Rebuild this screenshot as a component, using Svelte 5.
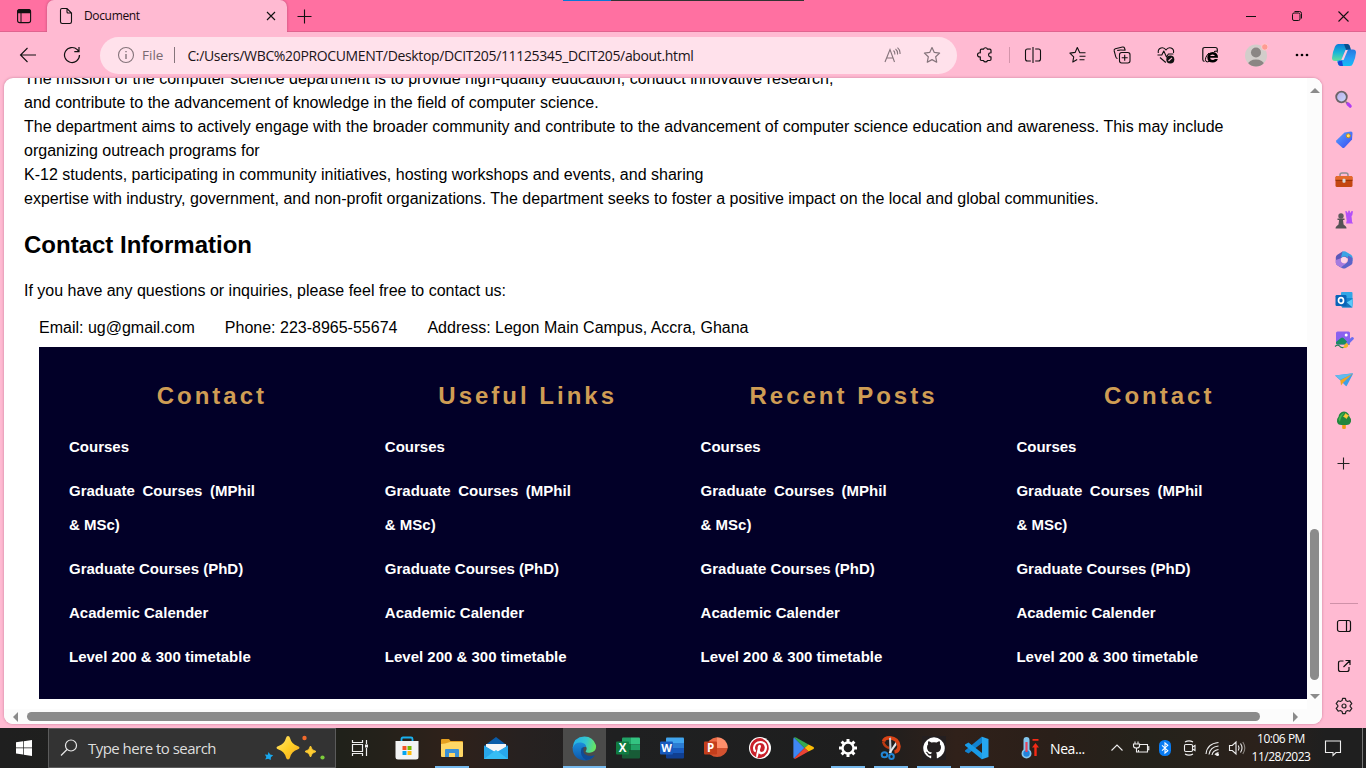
<script>
  const courses = ['Courses', 'Graduate Courses (MPhil & MSc)', 'Graduate Courses (PhD)', 'Academic Calender', 'Level 200 & 300 timetable'];
  const columns = ['Contact', 'Useful Links', 'Recent Posts', 'Contact'];
</script>

<div class="screen">
  <div class="peek"><i></i></div>
  <header class="titlebar">
    <div class="workspace">
      <svg width="16" height="16" viewBox="0 0 16 16"><rect x="1.6" y="1.6" width="13" height="13" rx="2.2" fill="none" stroke="#111" stroke-width="1.1"/><path d="M1.2 5.3V3.6Q1.2 1 3.8 1h8.6Q15 1 15 3.6v1.700z" fill="#111"/><path d="M5 5v9.500" stroke="#111"/></svg>
    </div>
    <div class="tab">
      <svg width="14" height="18" viewBox="0 0 14 18" fill="none" stroke="#111" stroke-width="1.1"><path d="M3 1.500h5l4.500 4.500v8.800q0 1.700-1.700 1.700H3.200q-1.700 0-1.700-1.700V3.200Q1.500 1.500 3 1.500zM8 1.500V5q0 1 1 1h3.500"/></svg>
      <span>Document</span>
      <svg class="close" width="10" height="10" viewBox="0 0 10 10" stroke="#111" stroke-width="1.1"><path d="M1 1l8 8M9 1L1 9"/></svg>
    </div>
    <svg class="newtab" width="15" height="15" viewBox="0 0 15 15" stroke="#111" stroke-width="1.1"><path d="M7.500 .5v14M.5 7.500h14"/></svg>
    <div class="win">
      <svg width="10" height="10" viewBox="0 0 10 10"><path d="M0 5.500h10" stroke="#111"/></svg>
      <svg width="12" height="12" viewBox="0 0 12 12" fill="none" stroke="#111"><rect x="1.500" y="3" width="7.500" height="7.500" rx="1.500"/><path d="M3.500 1.500h5Q10.500 1.500 10.500 3.500v5"/></svg>
      <svg width="11" height="11" viewBox="0 0 11 11" stroke="#111" stroke-width="1.1"><path d="M.5 .5l10 10M10.500 .5l-10 10"/></svg>
    </div>
  </header>

  <nav class="toolbar">
    <div class="cell back"><svg width="18" height="16" viewBox="0 0 18 16" fill="none" stroke="#111" stroke-width="1.1"><path d="M17 8H1.500M8.500 1L1.500 8l7 7"/></svg></div>
    <div class="cell reload"><svg width="18" height="18" viewBox="0 0 18 18" fill="none" stroke="#111" stroke-width="1.200"><path d="M16.500 9a7.500 7.500 0 1 1-2.200-5.300L16 5.500M16 1v4.700h-4.700"/></svg></div>
    <div class="address">
      <svg width="18" height="18" viewBox="0 0 18 18" fill="none" stroke="#85747b" stroke-width="1.100"><circle cx="9" cy="9" r="7.500"/><path d="M9 8v5M9 5v1.300" stroke-width="1.400"/></svg>
      <span class="file">File</span><i></i>
      <span class="url">C:/Users/WBC%20PROCUMENT/Desktop/DCIT205/11125345_DCIT205/about.html</span>
      <svg class="read" width="18" height="18" viewBox="0 0 18 18" fill="none" stroke="#85747b" stroke-width="1.100"><path d="M2 16L7 3.500 11.500 16M3.600 12h6.500M10.500 4.500q1.600 1.500 1.300 4M12.500 3q2.500 2 2 5.500M14.500 1.700q3 2.500 2.500 6.300"/></svg>
      <svg class="star" width="18" height="18" viewBox="0 0 18 18" fill="none" stroke="#85747b" stroke-width="1.200" stroke-linejoin="round"><path d="M9 1.500l2.300 4.900 5.300.7-3.900 3.700 1 5.400L9 13.600l-4.700 2.600 1-5.400L1.400 7.100l5.300-.7z"/></svg>
    </div>
    <div class="cell puzzle"><svg width="18" height="18" viewBox="0 0 18 18" fill="none" stroke="#111" stroke-width="1.200" stroke-linejoin="round"><path d="M5.500 3.200h2a2.100 2.100 0 0 1 4 0h2.300q1.200 0 1.200 1.200v2.400c-3.200-.7-3.200 4.700 0 4v2.500q0 1.200-1.200 1.200h-2.300a2.100 2.100 0 0 1-4 0h-2q-1.200 0-1.200-1.200v-2.400c-3.700.7-3.700-4.800 0-4.100V4.400q0-1.200 1.200-1.200z"/></svg></div>
    <div class="cell sep"><i></i></div>
    <div class="cell"><svg width="18" height="18" viewBox="0 0 18 18" fill="none" stroke="#111" stroke-width="1.100"><path d="M9 1v16M6.800 3H3.500q-2 0-2 2v8q0 2 2 2h3.300M11.200 3h3.300q2 0 2 2v8q0 2-2 2h-3.300"/></svg></div>
    <div class="cell w45"><svg width="18" height="18" viewBox="0 0 18 18" fill="none" stroke="#111" stroke-width="1.100" stroke-linejoin="round"><path d="M16.500 6.700h-5.700L8.300 1.500 6.100 6.400.9 7.100l3.800 3.700-.9 5.200 4.400-2.400M10.500 10.200h6M10.500 13.700h5"/></svg></div>
    <div class="cell"><svg width="18" height="18" viewBox="0 0 18 18" fill="none" stroke="#111" stroke-width="1.100" stroke-linejoin="round"><rect x="6.500" y="6.500" width="10.500" height="10.500" rx="2.200"/><path d="M11.700 8.800v6M8.700 11.800h6M4.500 12.500q-1.200-.2-1.700-1.700L1.200 5q-.4-1.600 1.100-2.200L9.500 1q1.500-.3 2 1l.7 2.300M4.200 4.500q1.800-1 8.500-.2"/></svg></div>
    <div class="cell"><svg width="18" height="18" viewBox="0 0 18 18" fill="none" stroke="#111" stroke-width="1.100" stroke-linejoin="round"><path d="M1.300 7C.5 1.800 6.500 0 9 4c2.500-4 8.500-2.200 7.500 3M.5 9h4.300l2-4 2.700 6 1.900-3h5M3 11.500l5.800 5"/><circle cx="13.300" cy="13.500" r="4" fill="#111" stroke="none"/><path d="M11.500 15l3.500-3.200" stroke="#ffbad2"/></svg></div>
    <div class="cell"><svg width="18" height="18" viewBox="0 0 18 18" fill="none"><path d="M3.500 15.500q-1.700-.2-1.700-2V3.500q0-2 2-2h10.500q2 0 2 2v2" stroke="#111" stroke-width="1.200"/><path d="M17 11.800H9Q9.400 14 11.800 14q1.400 0 2-1l3 .1Q15.800 16.500 11.800 16.500q-5.300 0-5.500-5Q6.400 6.400 11.800 6 17.200 6.400 17 11.800zM9.100 10h4.800Q13.500 8.400 11.600 8.400 9.500 8.400 9.100 10z" fill="#000"/><path d="M8 7q-5 5-3 8.500 1.500 1 4-.5M13 5.500q3.500-1.500 3.500 1" stroke="#000"/></svg></div>
    <div class="cell avatar"><svg width="24" height="24" viewBox="0 0 24 24"><defs><clipPath id="av"><circle cx="12" cy="12.500" r="11"/></clipPath></defs><circle cx="12" cy="12.500" r="11" fill="#d2cdca"/><g clip-path="url(#av)" fill="#8b8684"><circle cx="12" cy="9.500" r="5"/><ellipse cx="12" cy="21.500" rx="8" ry="5"/></g><circle cx="20.800" cy="4" r="3.200" fill="#ff9b92" stroke="#ffd0d8" stroke-width=".8"/></svg></div>
    <div class="cell"><svg width="16" height="6" viewBox="0 0 16 6"><circle cx="3" cy="3" r="1.350"/><circle cx="8" cy="3" r="1.350"/><circle cx="13" cy="3" r="1.350"/></svg></div>
    <div class="cell w40"><svg width="26" height="24" viewBox="0 0 26 24"><defs><linearGradient id="ca" x2="0" y2="1"><stop stop-color="#0b7bd8"/><stop offset=".5" stop-color="#19b6d8"/><stop offset="1" stop-color="#64e09a"/></linearGradient><linearGradient id="cb" x2="0" y2="1"><stop stop-color="#2878df"/><stop offset=".55" stop-color="#299cf6"/><stop offset="1" stop-color="#10bdf3"/></linearGradient></defs><path d="M7 1h9q2.500 0 3 3l.8 3h-4.500l-3 8q-1 3-3.500 3H4q-3 0-3-3Q1.500 9 4 3.500 5 1 7 1z" fill="url(#ca)"/><path d="M13 1h3.500q2 .3 2.600 3l.7 3h-4.500L14 4z" fill="#0a4f8d"/><path d="M19 23h-9q-3 0-3.500-4L6 17.500h4l3-8q1-3 3.500-3H22q3 0 3 3-.5 6-3 11Q21 23 19 23z" fill="url(#cb)"/><path d="M8 17.800h3l1 5.200h-2q-2.700 0-3.200-3.500z" fill="#1846d4"/><path d="M14.500 7h2.300l-4.200 10h-2.400z" fill="#ffcbdc"/></svg></div>
  </nav>

  <main>
    <section class="page">
      <div class="viewport">
        <div class="text">
          <p class="mission">The mission of the computer science department is to provide high-quality education, conduct innovative research,<br>and contribute to the advancement of knowledge in the field of computer science.<br>The department aims to actively engage with the broader community and contribute to the advancement of computer science education and awareness. This may include organizing outreach programs for<br>K-12 students, participating in community initiatives, hosting workshops and events, and sharing<br>expertise with industry, government, and non-profit organizations. The department seeks to foster a positive impact on the local and global communities.</p>
          <h2>Contact Information</h2>
          <p class="ask">If you have any questions or inquiries, please feel free to contact us:</p>
          <div class="contacts"><span>Email: ug@gmail.com</span><span>Phone: 223-8965-55674</span><span>Address: Legon Main Campus, Accra, Ghana</span></div>
        </div>
        <footer>
          {#each columns as title}
            <div class="col">
              <h3>{title}</h3>
              <ul>{#each courses as c}<li>{c}</li>{/each}</ul>
            </div>
          {/each}
        </footer>
      </div>
      <div class="vbar"><b class="up"></b><i></i><b class="down"></b></div>
      <div class="hbar"><b class="left"></b><i></i><b class="right"></b></div>
    </section>

    <aside>
      <div class="apps">
        <svg viewBox="0 0 20 20"><defs><linearGradient id="lens" x2="1" y2="1"><stop stop-color="#b9a9e6"/><stop offset="1" stop-color="#c9dcff"/></linearGradient></defs><path d="M12 12l2.500 2.500" stroke="#777" stroke-width="2"/><path d="M14 14l2.200 2.200" stroke="#b23cf2" stroke-width="3.200" stroke-linecap="round"/><circle cx="7.500" cy="7" r="5.300" fill="url(#lens)" stroke="#6b6468" stroke-width="1.800"/></svg>
        <svg viewBox="0 0 20 20"><defs><linearGradient id="tg" x1="0" y1="0" x2="1" y2="1"><stop stop-color="#57a5ff"/><stop offset="1" stop-color="#3a49f0"/></linearGradient></defs><path d="M10.500 2.500L17 1.500q1.500 0 1.500 1.500l-.5 6.500-7.500 8q-1.200 1-2.400 0L2.500 12.500q-1-1.200 0-2.300z" fill="url(#tg)"/><circle cx="14.300" cy="5.800" r="2" fill="#ffe36b" stroke="#c88b12"/></svg>
        <svg viewBox="0 0 20 20"><path d="M6 6.500V5q0-2 2-2h4q2 0 2 2v1.500" fill="none" stroke="#8d8d92" stroke-width="1.500"/><rect x="1.500" y="6" width="17" height="11" rx="1.500" fill="#c34712"/><path d="M1.500 7.500Q1.500 6 3 6h14q1.500 0 1.500 1.500V10h-17z" fill="#e46a2b"/><path d="M1.500 10.300h17" stroke="#913006"/><rect x="8.500" y="8.700" width="3" height="4" rx="1" fill="#d8dada"/></svg>
        <svg viewBox="0 0 20 20"><path d="M11.300 1l1.500.2.400 1.300h1V.8h1.700v1.700h1l.5-1.500 1.600.3-.7 4-.8.700.6 6 1 1.500h-7l.6-3z" fill="#b450f7"/><circle cx="7" cy="6" r="2.700" fill="#5d5a5c"/><path d="M3.500 8.500h7v1.500H9l.6 4.500 2 1.700q1 .8.900 2.300h-11q0-1.500 1-2.300l2-1.700.6-4.500H3.500z" fill="#555254"/></svg>
        <svg viewBox="0 0 20 20"><path d="M8.500 1.500L14 4.500v4L10 6.500 6.500 8.500 6 17 3 15Q1.800 14 1.800 12.500V7.500Q1.800 6 3 5z" fill="#5b58b8"/><path d="M8.500 1.500q1.500-.6 3 0L17 4.800q1.500 1 1.500 2.500v4l-4-2.300q-1-2.700-4-2.700L7 7.500z" fill="#3aa4e4"/><path d="M18.500 8v4.500q0 1.500-1.500 2.500l-5.500 3.200q-1.500.7-3 0L6 17l6-3.700q2-1.200 2-3.300V5.500z" fill="#5c63c8"/><path d="M1.800 10l4.500-1.500q.2 4 3.700 5l2-.3L7 17.500 3.200 15.300Q1.800 14.300 1.800 12.800z" fill="#a57bdf"/><circle cx="10" cy="10" r="3" fill="#ffd4e6"/></svg>
        <svg viewBox="0 0 20 20"><rect x="7" y="2" width="11.500" height="13" rx="1" fill="#31a6e6"/><path d="M7 8h11.500v8.500H7z" fill="#1687cf"/><path d="M10 14l8.500-5v8.500H8z" fill="#5ac9fa"/><path d="M10 10l8.500 7.500H8z" fill="#1673bd"/><rect x="1.500" y="5" width="11" height="11" rx="1.200" fill="#0864b8"/><ellipse cx="7" cy="10.500" rx="2.500" ry="2.900" fill="none" stroke="#fff" stroke-width="1.700"/></svg>
        <svg viewBox="0 0 20 20"><rect x="2" y="1.500" width="14" height="13" rx="1.500" fill="#8b61ef"/><path d="M2 12l5-4q1.200-1 2.400 0l6.600 6.500H3.500Q2 14.500 2 13z" fill="#198c62"/><circle cx="12.200" cy="5" r="1.500" fill="#fff"/><path d="M18.300 8.500l-5 5" stroke="#6b6cf0" stroke-width="3" stroke-linecap="round"/><path d="M12.700 12.700q2.500 2 .8 4.300-2 1.700-4.600.7 1.800-4 3.800-5z" fill="#f3b62d"/><path d="M1 16.500q3-2.500 4.500-.5t4 1.500" fill="none" stroke="#267f57" stroke-width="1.200"/></svg>
        <svg viewBox="0 0 20 20"><path d="M1 5.500l17.500-2.200q.8 0 .3.900l-6 11.600q-.5.700-1.200 0L6.500 10.500z" fill="#3c9fe8"/><path d="M18.700 3.500L6.300 10.200l.7 5.300 2.400-3z" fill="#f1a522"/><path d="M1 5.500l17.700-2L6.300 9.800z" fill="#64bbed"/></svg>
        <svg viewBox="0 0 20 20"><path d="M8.200 13.500h3.600v4.700q0 .8-1.800.8t-1.800-.8z" fill="#ee9b16"/><path d="M10 1.500q5 .8 5.500 5.200 2 1.800 1.500 4.800-1 3.500-4.500 3.500h-5Q3.500 15 3 11.500q-.4-2.800 1.500-4.800Q5 2.300 10 1.500z" fill="#21863e"/><path d="M4.500 9.500Q6 4 10.500 2.500 6.500 7 6 12z" fill="#46b650"/><path d="M11.700 3.600l1.100 1.200 1.700.8-1.200 1.300-.9 1.600-1.300-1.200-1.600-.9 1.200-1.200z" fill="#ffc937" stroke="#ffc937" stroke-width=".8"/></svg>
        <svg class="add" viewBox="0 0 20 20"><path d="M9.500 3.500v12M3.500 9.500h12" stroke="#222" stroke-width="1.100"/></svg>
      </div>
      <div class="tools">
        <svg viewBox="0 0 20 20" fill="none" stroke="#111" stroke-width="1.200"><rect x="3.500" y="4.500" width="13" height="11" rx="2"/><path d="M12.500 4.500v11"/></svg>
        <svg viewBox="0 0 20 20" fill="none" stroke="#111" stroke-width="1.200"><path d="M9.500 5H6.500Q4.500 5 4.500 7v6.500q0 2 2 2H13q2 0 2-2V11M11.500 4.500h4.500v4.500M16 4.500L9.500 11"/></svg>
        <svg viewBox="0 0 20 20" fill="none" stroke="#222" stroke-width="1.200" stroke-linejoin="round"><path d="M8.600 2.300h2.800l.5 2.200 1.700 1 2.200-.7 2 2.800-1.600 1.700v1.400l1.600 1.700-2 2.800-2.200-.7-1.700 1-.5 2.200H8.600l-.5-2.200-1.700-1-2.200.7-2-2.800 1.600-1.700V9.300L2.200 7.600l2-2.800 2.200.7 1.700-1z"/><circle cx="10" cy="10" r="2"/></svg>
      </div>
    </aside>
  </main>

  <div class="taskbar">
    <div class="t" style:width="48px"><svg width="16" height="16" viewBox="0 0 16 16" fill="#fff"><path d="M0 2.300l7-1v6.200H0zM7.700 1.200L16 0v7.500H7.700zM0 8.300h7v6.300l-7-1zM7.700 8.300H16V16l-8.300-1.200z"/></svg></div>
    <div class="search">
      <svg width="18" height="18" viewBox="0 0 18 18" fill="none" stroke="#e8e8e8" stroke-width="1.200"><circle cx="11" cy="6.500" r="5.500"/><path d="M7 10.500l-6 6"/></svg>
      <span>Type here to search</span>
      <svg class="spark" width="62" height="26" viewBox="0 0 62 26"><defs><linearGradient id="sp" x1="0" y1="0" x2="1" y2="1"><stop stop-color="#ffe477"/><stop offset=".5" stop-color="#ffcf26"/><stop offset="1" stop-color="#f2a520"/></linearGradient></defs><path d="M24 1q1.500 0 2 2 1.500 6 7.500 8 2 .7 2 1.700t-2 1.800q-6 2-7.500 8-.5 2-2 2t-2-2q-1.500-6-7.500-8-2-.8-2-1.800t2-1.700q6-2 7.500-8 .5-2 2-2z" fill="url(#sp)"/><path d="M46.500 11q.8 4.500 5.500 5.500-4.700 1-5.500 5.500-.8-4.500-5.500-5.500 4.700-1 5.500-5.500z" fill="#ffcc31" stroke="#ffcc31"/><path d="M4.500 17l1.700 2.500 3 .8-2.300 2-.2 2.700-2.500-1.200-3 .8 1.200-2.700L.8 19.500l3 .3z" fill="#19a7ed"/><circle cx="40.500" cy="3" r="2.200" fill="#f26a2c"/><circle cx="58.500" cy="22.500" r="2.100" fill="#7dcc3b"/></svg>
    </div>
    <div class="t" style:width="48px"><svg width="18" height="18" viewBox="0 0 18 18" fill="none" stroke="#eee" stroke-width="1.200"><path d="M1.500 1v2.500h10V1M1.500 17v-2.500h10V17M1.500 5.500h10v7h-10zM15.500 1v4M15.500 9v8"/><path d="M14 5.500h3v3h-3z" fill="#eee" stroke="none"/></svg></div>
    <div class="t" style:width="46px"><svg width="24" height="24" viewBox="0 0 24 24"><path d="M6.500 6V3q0-1.500 1.500-1.500h8q1.500 0 1.500 1.500v3" fill="none" stroke="#19b1ef" stroke-width="1.800"/><path d="M.5 5h23v16q0 2.500-2.500 2.500H3Q.5 23.500.5 21z" fill="#f3f3f3"/><path d="M7.500 10h4v4h-4z" fill="#f35325"/><path d="M12.500 10h4v4h-4z" fill="#77b900"/><path d="M7.500 15h4v4h-4z" fill="#05a6f0"/><path d="M12.500 15h4v4h-4z" fill="#ffba08"/></svg></div>
    <div class="t open" style:width="44px"><svg width="22" height="20" viewBox="0 0 22 20"><path d="M0 2q0-1 1-1h7l1.500 2H21q1 0 1 1v14H0z" fill="#e6a020"/><path d="M0 6q4 0 9-2h12q1 0 1 1v13q0 1-1 1H1q-1 0-1-1z" fill="#ffd766"/><path d="M4 19v-7q0-1 1-1h12q1 0 1 1v7h-4v-4H8v4z" fill="#3b91d6"/></svg></div>
    <div class="t" style:width="44px"><svg width="24" height="24" viewBox="0 0 24 24"><path d="M0 10L12 1l12 9v4H0z" fill="#0a5ca9"/><path d="M2 8h20v3L12 18 2 11z" fill="#f5f5f7"/><path d="M0 9.500l12 7 12-7V23H0z" fill="#28a7ea"/><path d="M0 23l12-9 12 9z" fill="#36bdf4"/></svg></div>
    <div class="t" style:width="45px"></div>
    <div class="t active" style:width="43px"><svg width="25" height="25" viewBox="0 0 25 25"><defs><linearGradient id="ed" x2="1" y1=".3" y2=".5"><stop stop-color="#24b0e8"/><stop offset=".55" stop-color="#35c6cf"/><stop offset="1" stop-color="#69e75d"/></linearGradient><linearGradient id="ee" x2="0" y2="1"><stop stop-color="#1c8edb"/><stop offset="1" stop-color="#0d57aa"/></linearGradient></defs><path d="M.6 12Q1.500 1 12.500.6q8.500.2 11.400 8.400 1.200 7-6 7.800-3.900 0-4.300-1.300 2.400-3.500-.5-5.700Q7.500 5.500.6 12z" fill="url(#ed)"/><path d="M.6 12Q3 5.900 9.300 6.600q4.800 1 4.700 4.200-5.600.5-4.300 6 1.700 4.200 5.300 4.700 4.500.2 7.200-1.800-3.500 5-9.700 4.700Q1 23.500.6 12z" fill="url(#ee)"/><path d="M9.600 12q-2.500 8 4.500 12 6.500-.7 8.800-5-5.900 2.600-10.300-1Q10.500 15.600 12 11z" fill="#104b96"/></svg></div>
    <div class="t" style:width="44px"><svg width="24" height="24" viewBox="0 0 24 24"><path d="M6 2.500q0-1 1-1h8v7H6z" fill="#21a366"/><path d="M15 1.500h8q1 0 1 1v6h-9z" fill="#33c481"/><path d="M6 8.500h9v6H6z" fill="#107c41"/><path d="M15 8.500h9v6h-9z" fill="#21a366"/><path d="M6 14.500h18v7q0 1-1 1H7q-1 0-1-1z" fill="#185c37"/><rect y="5.500" width="13" height="13" rx="1" fill="#107c41"/><text x="6.500" y="16.200" class="g">X</text></svg></div>
    <div class="t" style:width="43px"><svg width="24" height="24" viewBox="0 0 24 24"><path d="M6 2.500q0-1 1-1h16q1 0 1 1V7H6z" fill="#41a5ee"/><path d="M6 7h18v5H6z" fill="#2b7cd3"/><path d="M6 12h18v5H6z" fill="#185abd"/><path d="M6 17h18v4.500q0 1-1 1H7q-1 0-1-1z" fill="#103f91"/><rect y="5.500" width="13" height="13" rx="1" fill="#185abd"/><text x="6.500" y="16" class="g w">W</text></svg></div>
    <div class="t" style:width="45px"><svg width="24" height="24" viewBox="0 0 24 24"><path d="M2.500 12A10.800 10.800 0 0 1 13 1.200V12z" fill="#ed6c47"/><path d="M13 1.200A10.800 10.800 0 0 1 23.800 12H13z" fill="#ff8f6b"/><path d="M2.500 12h21.300A10.800 10.800 0 0 1 2.500 12z" fill="#d35230"/><rect y="5.500" width="13" height="13" rx="1" fill="#c43e1c"/><text x="6.500" y="16.200" class="g">P</text></svg></div>
    <div class="t" style:width="44px"><svg width="24" height="24" viewBox="0 0 24 24"><circle cx="12" cy="12" r="11" fill="#fff"/><path d="M12.200 2a10 10 0 0 0-4 19.200q-.1-1.700.2-3.200l1.300-5.500q-.4-3.200 1.700-3.700 1.800 0 1.500 1.900l-1 3.200q-.2 1.800 1.700 2 3-.3 3.200-4.700-.4-4-4.600-4.200-4.900.4-5.200 4.700 0 1.600.9 2.500.2.300.1.700l-.4 1.200q-.2.400-.6.200-2.200-1.300-2-4.700Q5.600 5.500 12.600 5q6.200.7 6.500 6.300-.5 6.700-6 7.200-1.600-.1-2.400-1.200l-1 3.900-.6.800A10 10 0 1 0 12.200 2z" fill="#c9202b"/></svg></div>
    <div class="t" style:width="44px"><svg width="22" height="24" viewBox="0 0 22 24"><path d="M1 1.500L11.500 12 1 22.500q-.6-.3-.6-1.500V3Q.4 1.800 1 1.500z" fill="#3f86f4"/><path d="M1 1.500Q1.800.8 3 1.500L15.500 8.600 11.500 12z" fill="#35a852"/><path d="M15.500 8.500l5 2.600q1.200.9 0 1.800l-5 2.700L11.500 12z" fill="#fbbc05"/><path d="M1 22.500q.8.700 2 0l12.500-7L11.500 12z" fill="#ea4335"/></svg></div>
    <div class="t open" style:width="44px"><svg width="20" height="20" viewBox="0 0 20 20" fill="none" stroke="#fff"><circle cx="10" cy="10" r="5.500" stroke-width="2.400"/><path d="M10 1v3M10 16v3M1 10h3M16 10h3M3.600 3.600l2.200 2.200M14.200 14.200l2.200 2.200M3.600 16.400l2.200-2.200M14.200 5.800l2.200-2.200" stroke-width="3"/></svg></div>
    <div class="t open" style:width="42px"><svg width="22" height="24" viewBox="0 0 22 24"><path d="M3.500 5.500Q4.500 1.800 10 1.800q8 .7 9 8.700-.5 5-4.500 5.500" fill="none" stroke="#d84316" stroke-width="3.500"/><path d="M3 5.500q1.500 5.500 6.500 6.500" fill="none" stroke="#b93a12" stroke-width="2.500"/><path d="M9 2l2-.5.700 15.500H9.500z" fill="#c5ccd4"/><path d="M15.800 6l.7 3-6.300 8.500-1.500-1z" fill="#e3e7eb"/><ellipse cx="4.500" cy="18.700" rx="2.800" ry="2.500" fill="none" stroke="#2386d4" stroke-width="2"/><ellipse cx="11.500" cy="20.500" rx="2.300" ry="2.500" fill="none" stroke="#2386d4" stroke-width="2"/></svg></div>
    <div class="t open" style:width="44px"><svg width="24" height="24" viewBox="0 0 24 24"><rect width="24" height="24" fill="#241f20"/><path d="M12 1.300a10.800 10.800 0 0 0-3.500 21q.7.100.7-.6v-2.200q-3 .6-3.700-1.400-.5-1.300-1.300-1.700-.9-.7.200-.7 1 .1 1.700 1.200 1 1.700 3.200.9.100-.8.700-1.300-5-.6-5-5.300 0-1.700 1.200-2.900-.5-1.200.1-3 1.200 0 3 1.200 2.700-.7 5.400 0 1.800-1.200 3-1.200.6 1.800.1 3 1.200 1.200 1.200 2.900 0 4.700-5 5.300.8.700.8 2.200v3q0 .7.700.6a10.800 10.800 0 0 0-3.500-21z" fill="#fff"/></svg></div>
    <div class="t open" style:width="42px"><svg width="26" height="24" viewBox="0 0 26 24"><path d="M18 .7l6.500 2.400v17.800L18 23.300z" fill="#26a7f0"/><path d="M18 .5v6.500L4.500 17.500 1 15.500v-1z" fill="#1182cf"/><path d="M18 23.500V17L4.500 6.500 1 8.500v1z" fill="#199be7"/></svg></div>
    <div class="weather"><svg width="20" height="24" viewBox="0 0 20 24"><path d="M3.500 4a3 3 0 0 1 6 0v9.500q2 1.500 2 4a5 5 0 0 1-10 0q0-2.500 2-4z" fill="#83c6ee"/><circle cx="6.500" cy="17.500" r="3.200" fill="#2383dd"/><path d="M6.500 6v10" stroke="#e6435c" stroke-width="2.200"/><path d="M12.500 3h6v1.700h-6zM15.500 7l3.500 4.500h-2.300V20h-2.400v-8.500H12z" fill="#f52b16"/></svg><span>Nea...</span></div>
    <div class="tray">
      <svg viewBox="0 0 18 18"><path d="M3.500 11.500L9 6l5.500 5.500"/></svg>
      <svg viewBox="0 0 18 18"><path d="M8 5.500h7.500v7.500H6.500v-2M15.500 7.800h1.300v3h-1.300M3 2.500V5M6 2.500V5M1.500 5h6v2q0 2-3 2t-3-2zM4.500 9v4H6"/></svg>
      <svg viewBox="0 0 18 18"><rect x="3" y="1" width="12" height="16" rx="5.500" fill="#087bf2" stroke="none"/><path d="M6 6.300l5.800 5.400L9 14V4l2.800 2.300L6 11.700" stroke="#fff"/></svg>
      <svg viewBox="0 0 18 18"><rect x="4.500" y="5.500" width="8" height="7" rx="1.200"/><path d="M12.500 8l2.500-1.500v5L12.500 10M5 3q4-2.300 8 0M5 15q4 2.300 8 0"/></svg>
      <svg viewBox="0 0 18 18"><path d="M2 15Q3 4.500 14.500 3.500M5 15.500Q6 8 14.500 7M8 16q.7-4.500 6.500-5.500M11 16q.5-2 3.500-2.500"/><circle cx="13.500" cy="15.500" r="1" fill="#fff"/></svg>
      <svg viewBox="0 0 18 18"><path d="M1.500 6.500h2.800L8 3v12l-3.700-3.500H1.500zM10.300 6.500q1.500 2.500 0 5M12.500 4.500q3 4.500 0 9"/><path d="M14.800 3q4 6 0 12" stroke="#8b8580"/></svg>
    </div>
    <div class="clock"><span>10:06 PM</span><span>11/28/2023</span></div>
    <div class="notice"><svg width="18" height="18" viewBox="0 0 18 18" fill="none" stroke="#eee" stroke-width="1.100"><path d="M1.500 2h15v11.500h-4.500L9 16.500v-3H1.500z"/></svg></div>
  </div>
</div>

<style>
  :global(body) { margin: 0; overflow: hidden; }
  svg { display: block; flex: none; }
  .screen { width: 1366px; height: 768px; display: flex; flex-direction: column; background: #ffbad2; font-family: "Open Sans", "Noto Sans", sans-serif; overflow: hidden; position: relative; }
  .peek { position: absolute; left: 563px; top: 0; width: 241px; height: 1px; background: #333; z-index: 3; }
  .peek i { display: block; width: 48px; height: 1px; background: #0a78d6; }
  .titlebar { height: 32px; display: flex; align-items: center; background: #ff70a1; box-shadow: inset 0 -1px #e0648f; }
  .workspace { width: 47px; display: flex; justify-content: center; }
  .tab { box-sizing: border-box; width: 240px; height: 32px; padding: 0 11px 0 12px; display: flex; align-items: center; background: #ffbad2; border-radius: 7px 7px 0 0; box-shadow: 0 0 3px #b84c76; clip-path: inset(0 -3px 0 -3px); font-size: 12px; color: #17090f; }
  .tab span { margin-left: 11px; letter-spacing: -.35px; position: relative; top: -1px; }
  .close { margin-left: auto; }
  .newtab { margin-left: 10px; }
  .win { margin-left: auto; width: 138px; display: grid; grid-template-columns: repeat(3, 1fr); justify-items: center; align-items: center; }
  .toolbar { height: 46px; display: flex; align-items: center; }
  .cell { width: 44px; display: flex; justify-content: center; align-items: center; }
  .back { width: 55px; } .reload { width: 34px; margin-right: 11px; }
  .puzzle { margin-left: 6px; }
  .sep { width: 4px; } .sep i { width: 1px; height: 16px; background: #d394aa; }
  .w45 { width: 45px; } .avatar { width: 48px; } .w40 { width: 40px; }
  .address { box-sizing: border-box; width: 857px; height: 37px; border-radius: 19px; background: #ffe1eb; display: flex; align-items: center; padding: 0 16px 0 17px; font-size: 14px; color: #1b1418; white-space: nowrap; }
  .file { margin-left: 7px; color: #796970; font-size: 13.500px; }
  .address i { width: 1px; height: 16px; background: #85747b; margin: 0 12px 0 11px; }
  .url { letter-spacing: -.35px; }
  .read { margin-left: auto; } .star { margin-left: 22px; }
  main { height: 650px; display: flex; }
  .page { width: 1318px; height: 646px; margin-left: 4px; background: #fff; border-radius: 9px; overflow: hidden; display: grid; grid-template-columns: 1303px 15px; grid-template-rows: 631px 15px; box-shadow: 0 0 3px #c9809b; }
  .viewport { font-family: "Liberation Sans", Arial, sans-serif; font-size: 16px; line-height: 24px; color: #000; overflow: hidden; }
  .text { padding: 0 20px; }
  p { margin: 0; }
  .mission { margin-top: -11px; }
  h2 { margin: 20px 0; font-size: 24px; line-height: 28px; }
  .text .ask { margin-top: 19px; }
  .contacts { padding: 13px 15px 7px; display: flex; gap: 30px; }
  footer { height: 352px; width: 1268px; margin-left: 35px; box-sizing: border-box; background: #020028; padding: 30px 0 0 30px; display: flex; }
  .col { width: 285.800px; margin-right: 30px; flex: none; }
  h3 { margin: 0 0 16px; font-size: 24px; line-height: 37px; letter-spacing: 3px; text-align: center; color: #cf9d54; }
  ul { list-style: none; margin: 0; padding: 0; width: 186px; }
  li { color: #fff; font-size: 15px; font-weight: bold; line-height: 34px; margin-bottom: 10px; text-align: justify; }
  .vbar { grid-column: 2; grid-row: 1; background: #fcfcfc; display: flex; flex-direction: column; align-items: center; padding-top: 10px; }
  .vbar i { width: 9px; height: 151px; border-radius: 5px; background: #8b8b8b; margin-top: 436px; }
  .up, .down { width: 0; border: 5px solid transparent; border-top: 0; border-bottom: 5px solid #8b8b8b; }
  .down { border-bottom: 0; border-top: 5px solid #8b8b8b; margin-top: 14px; }
  .hbar { grid-column: 1 / 3; background: #fcfcfc; display: flex; align-items: center; padding-left: 9px; }
  .hbar i { width: 1233px; height: 9px; border-radius: 5px; background: #8b8b8b; margin-left: 9px; }
  .left, .right { height: 0; border: 5px solid transparent; border-left: 0; border-right: 5px solid #8b8b8b; }
  .right { border-right: 0; border-left: 5px solid #8b8b8b; margin-left: 33px; }
  aside { width: 44px; display: flex; flex-direction: column; justify-content: space-between; }
  .apps, .tools { display: flex; flex-direction: column; align-items: center; }
  .apps svg { width: 20px; height: 20px; margin-bottom: 20px; }
  .apps { padding-top: 12px; }
  .apps .add { margin: 4px 0 0; }
  .tools { border-top: 1px solid #cf91a8; width: 28px; margin: 0 auto 12px; padding-top: 12px; gap: 20px; }
  .tools svg { width: 20px; height: 20px; }
  .taskbar { height: 40px; display: flex; align-items: center; background: linear-gradient(90deg, #1f1f1f 0, #20211a 25%, #24211a 28%, #2f211a 33%, #272120 38%, #1f2021 45%, #1e1e1e 64%, #30211a 70%, #2a1f19 77%, #24221b 84%, #2b211b 92%, #1f1f1f 97%); color: #fff; }
  .t { height: 40px; display: flex; align-items: center; justify-content: center; flex: none; }
  .open { background: linear-gradient(#76b9ed, #76b9ed) center bottom / 34px 2px no-repeat; }
  .active { background: linear-gradient(#76b9ed, #76b9ed) bottom / 100% 2px no-repeat #4b4b4a; }
  .g { font: bold 11.500px "Open Sans", sans-serif; fill: #fff; text-anchor: middle; }
  .w { font-size: 11px; }
  .search { box-sizing: border-box; width: 288px; height: 40px; border: 1px solid #5b5b5b; background: #333; display: flex; align-items: center; padding: 0 9px 0 11px; font-size: 15px; color: #dedede; }
  .search span { margin-left: 10px; letter-spacing: -.53px; white-space: nowrap; }
  .spark { margin-left: auto; }
  .weather { width: 105px; box-sizing: border-box; padding-left: 22px; display: flex; align-items: center; gap: 10px; font-size: 14px; letter-spacing: -.4px; }
  .tray { display: flex; gap: 6px; margin-left: 5px; }
  .tray svg { width: 18px; height: 18px; fill: none; stroke: #eee; stroke-width: 1.100; }
  .clock { width: 70px; display: flex; flex-direction: column; align-items: center; font-size: 12px; line-height: 18px; letter-spacing: -.48px; }
  .notice { margin-left: auto; width: 46px; display: flex; align-items: center; height: 40px; box-sizing: border-box; padding-left: 4px; background: linear-gradient(#777, #777) 42px 0 / 1px 100% no-repeat; }
</style>
